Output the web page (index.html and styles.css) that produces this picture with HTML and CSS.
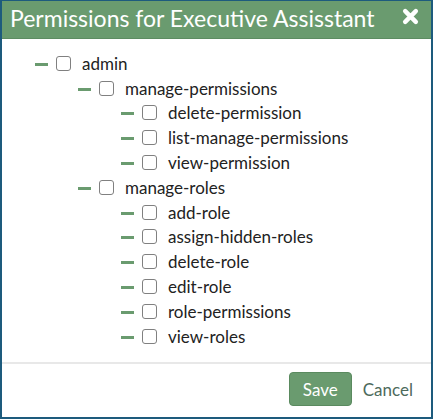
FILE: index.html
```html
<!DOCTYPE html>
<html>
<head>
<meta charset="utf-8">
<link rel="stylesheet" href="styles.css">
</head>
<body>
<div class="dialog">
  <div class="header">
    <span class="title">Permissions for Executive Assisstant</span>
    <svg class="close" width="17" height="17" viewBox="0 0 16 16"><path d="M3 3 L13 13 M13 3 L3 13" stroke="#fff" stroke-width="4.2" stroke-linecap="round"/></svg>
  </div>
  <div class="body">
    <ul class="tree">
      <li><div class="row"><span class="dash"></span><span class="box"></span><span class="label">admin</span></div>
        <ul>
          <li><div class="row"><span class="dash"></span><span class="box"></span><span class="label">manage-permissions</span></div>
            <ul>
              <li><div class="row"><span class="dash"></span><span class="box"></span><span class="label">delete-permission</span></div></li>
              <li><div class="row"><span class="dash"></span><span class="box"></span><span class="label">list-manage-permissions</span></div></li>
              <li><div class="row"><span class="dash"></span><span class="box"></span><span class="label">view-permission</span></div></li>
            </ul>
          </li>
          <li><div class="row"><span class="dash"></span><span class="box"></span><span class="label">manage-roles</span></div>
            <ul>
              <li><div class="row"><span class="dash"></span><span class="box"></span><span class="label">add-role</span></div></li>
              <li><div class="row"><span class="dash"></span><span class="box"></span><span class="label">assign-hidden-roles</span></div></li>
              <li><div class="row"><span class="dash"></span><span class="box"></span><span class="label">delete-role</span></div></li>
              <li><div class="row"><span class="dash"></span><span class="box"></span><span class="label">edit-role</span></div></li>
              <li><div class="row"><span class="dash"></span><span class="box"></span><span class="label">role-permissions</span></div></li>
              <li><div class="row"><span class="dash"></span><span class="box"></span><span class="label">view-roles</span></div></li>
            </ul>
          </li>
        </ul>
      </li>
    </ul>
  </div>
  <div class="footer">
    <button class="save">Save</button>
    <button class="cancel">Cancel</button>
  </div>
</div>
</body>
</html>
```
FILE: styles.css
```css
html, body { margin: 0; padding: 0; background: #fff; }
body { font-family: Lato, "Noto Sans", sans-serif; }
.dialog {
  width: 433px; height: 419px; box-sizing: border-box;
  border: 2px solid #1d5b7d; border-top-width: 1px;
  display: flex; flex-direction: column; background: #fff;
}
.header {
  background: #6a9b6f; height: 38px; box-sizing: border-box;
  display: flex; align-items: center; justify-content: space-between;
  padding: 0 12px 3px 8px;
  border-bottom: 1px solid #5d8c62;
}
.title { color: #fff; font-size: 23px; line-height: 1; }
.close { margin-top: -4px; }
.body { flex: 1; padding: 12px 0 0 33px; }
.tree, .tree ul { list-style: none; margin: 0; padding: 0; }
.tree ul { padding-left: 43px; }
.row { display: flex; align-items: center; height: 24.8px; }
.dash { width: 13px; height: 3px; background: #6a9b6f; margin-right: 8px; margin-top: 2px; }
.box {
  border: 1px solid #808080; border-radius: 3px;
  box-sizing: border-box; width: 15px; height: 15px; margin-right: 11px; background: #fff;
}
.label { font-size: 17px; color: #222; }
.footer {
  border-top: 2px solid #e8e8e8; height: 55px; box-sizing: border-box;
  display: flex; align-items: center; justify-content: flex-end; padding: 0 18px 3px 0;
}
.save {
  font-family: inherit; background: #6a9b6f; color: #fff; border: 1px solid #5a8a5f;
  border-radius: 4px; font-size: 17px; width: 63px; height: 34px; margin-right: 11px;
}
.cancel {
  font-family: inherit; background: none; border: none; color: #4d6a5c; font-size: 17px; padding: 0;
}
```
